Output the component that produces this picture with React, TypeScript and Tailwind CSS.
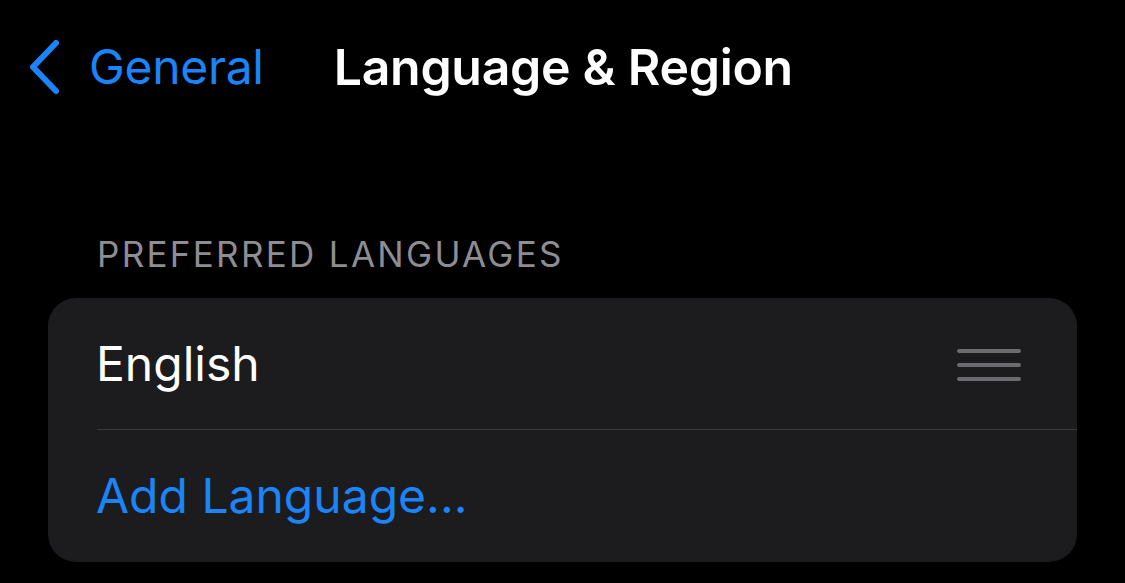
import React from 'react';

const font = { fontFamily: 'Inter, "Noto Sans", sans-serif' };

export default function App() {
  return (
    <div className="w-[1125px] h-[583px] bg-black overflow-hidden" style={font}>
      {/* Nav bar */}
      <div className="flex items-center h-[134px] pl-[27px]">
        <svg width="34" height="56" viewBox="0 0 34 56" className="shrink-0 -mt-[1px]">
          <path d="M29 4 L6 28 L29 52" fill="none" stroke="#1a84f8" strokeWidth="6" strokeLinecap="round" strokeLinejoin="round" />
        </svg>
        <span className="ml-[28px] text-[48px] leading-none text-[#1a84f8] tracking-[-0.3px]">General</span>
        <span className="ml-[70px] text-[50px] leading-none font-semibold text-white tracking-[-0.3px]">Language &amp; Region</span>
      </div>

      {/* Section header */}
      <div className="mt-[100px] pl-[97px] h-[40px] flex items-center text-[35px] leading-none text-[#8d8d93] tracking-[2.3px]">
        PREFERRED LANGUAGES
      </div>

      {/* Card */}
      <div className="mt-[24px] mx-[48px] w-[1029px] rounded-[28px] bg-[#1c1c1e] overflow-hidden">
        <div className="flex items-center h-[131px] pl-[48px] pr-[56px]">
          <span className="flex-1 text-[48px] leading-none text-white">English</span>
          <div className="flex flex-col gap-[10px] mt-[2px]">
            <div className="w-[64px] h-[4px] rounded-full bg-[#6b6b70]" />
            <div className="w-[64px] h-[4px] rounded-full bg-[#6b6b70]" />
            <div className="w-[64px] h-[4px] rounded-full bg-[#6b6b70]" />
          </div>
        </div>
        <div className="ml-[49px] h-px bg-[#3a3a3c]" />
        <div className="flex items-center h-[132px] pl-[48px]">
          <span className="text-[48px] leading-none text-[#1a84f8]">Add Language...</span>
        </div>
      </div>
    </div>
  );
}
